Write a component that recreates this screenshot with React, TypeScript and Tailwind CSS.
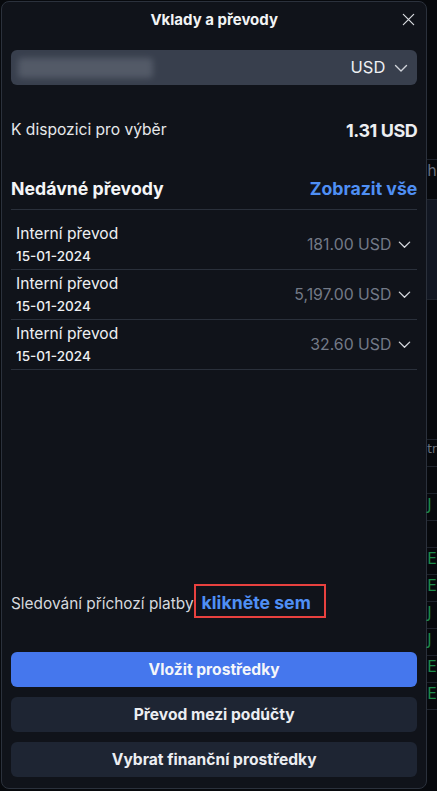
import React from "react";

const Chevron = ({ className = "" }: { className?: string }) => (
  <svg viewBox="0 0 16 16" className={className} fill="none" stroke="currentColor" strokeWidth="1.4" strokeLinecap="round" strokeLinejoin="round">
    <path d="M2.5 5.5 8 11l5.5-5.5" />
  </svg>
);

const rows = [
  { amount: "181.00 USD" },
  { amount: "5,197.00 USD" },
  { amount: "32.60 USD" },
];

export default function App() {
  return (
    <div className="w-[437px] h-[791px] bg-[#07090d] flex overflow-hidden" style={{ fontFamily: "Inter, 'Noto Sans', sans-serif" }}>
      <div className="w-[428px] h-[788px] mt-px ml-px border border-[#2b313c] rounded-lg bg-[#10131a] flex flex-col px-[9px] text-white">
        <div className="relative h-[36px] flex items-center justify-center">
          <span className="text-[15px] font-bold text-[#f2f3f5]">Vklady a převody</span>
          <svg viewBox="0 0 16 16" className="absolute right-[1px] top-[10px] w-[15px] h-[15px] text-[#d8dbe0]" fill="none" stroke="currentColor" strokeWidth="1.3" strokeLinecap="round">
            <path d="M2.5 2.5l11 11M13.5 2.5l-11 11" />
          </svg>
        </div>
        <div className="mt-[12px] h-[35px] rounded-md bg-[#383f4d] flex items-center pl-[7px] pr-[8px]">
          <div className="w-[135px] h-[20px] rounded bg-[#5a616e] blur-[3px] opacity-80" />
          <div className="flex-1" />
          <span className="text-[16.5px] text-[#eef0f3]">USD</span>
          <Chevron className="w-[16px] h-[16px] ml-[8px] text-[#d0d4da]" />
        </div>
        <div className="mt-[33px] h-[24px] flex items-center justify-between">
          <span className="text-[15.6px] text-[#e6e8eb]">K dispozici pro výběr</span>
          <span className="text-[18px] font-bold tracking-tight text-[#eceef1]">1.31 USD</span>
        </div>
        <div className="mt-[34px] h-[26px] flex items-center justify-between">
          <span className="text-[17.7px] font-bold text-[#f4f5f7]">Nedávné převody</span>
          <span className="text-[17.7px] font-bold text-[#4f8ff4]">Zobrazit vše</span>
        </div>
        <div className="mt-[7px] border-b border-[#2a303b]" />
        <div className="pt-[10px]">
          {rows.map((r, i) => (
            <div key={i} className="h-[50px] border-b border-[#2a303b] flex items-center justify-between pl-[5px] pr-[5px]">
              <div className="flex flex-col leading-[22px]">
                <span className="text-[15.6px] text-[#eef0f2]">Interní převod</span>
                <span className="text-[13.6px] font-medium text-[#eef0f2]">15-01-2024</span>
              </div>
              <div className="flex items-center">
                <span className="text-[15.8px] text-[#737a87]">{r.amount}</span>
                <Chevron className="w-[15px] h-[15px] ml-[6px] text-[#d5d8dd]" />
              </div>
            </div>
          ))}
        </div>
        <div className="flex-1" />
        <div className="flex items-baseline">
          <span className="text-[15.4px] leading-[22px] text-[#d6d9de]">Sledování příchozí platby</span>
          <span className="pt-[6px] pb-[2px] pl-[6px] pr-[13px] border-2 border-[#e8413f] text-[#4f8ff4] font-bold text-[17.7px] leading-[22px]">klikněte sem</span>
        </div>
        <div className="mt-[34px] flex flex-col gap-[10px] mb-[11px]">
          <button className="h-[35px] rounded-md bg-[#4577ed] text-[15.6px] font-bold text-[#f4f6fa]">Vložit prostředky</button>
          <button className="h-[35px] rounded-md bg-[#1e2533] text-[15.6px] font-bold text-[#eceef2]">Převod mezi podúčty</button>
          <button className="h-[35px] rounded-md bg-[#1e2533] text-[15.6px] font-bold text-[#eceef2]">Vybrat finanční prostředky</button>
        </div>
      </div>
      <div className="flex-1 flex flex-col text-[#1f8a4c] text-[15px]" style={{ fontFamily: "'DejaVu Sans', sans-serif" }}>
        <div className="h-[160px] border-b border-[#1e232c]" />
        <div className="h-[40px] border-b border-[#1e232c] text-[#6b7280]">h</div>
        <div className="h-[100px] border-b border-[#1e232c] bg-[#121722]" />
        <div className="h-[140px] border-b border-[#1e232c]" />
        <div className="h-[27px] border-b border-[#1e232c] text-[#6b7280] text-[12px]">tr</div>
        <div className="h-[27px] border-b border-[#1e232c]" />
        <div className="h-[27px] border-b border-[#1e232c]">J</div>
        <div className="h-[27px] border-b border-[#1e232c]" />
        <div className="h-[27px] border-b border-[#1e232c]">E</div>
        <div className="h-[27px] border-b border-[#1e232c]">E</div>
        <div className="h-[27px] border-b border-[#1e232c]">J</div>
        <div className="h-[27px] border-b border-[#1e232c]">J</div>
        <div className="h-[27px] border-b border-[#1e232c]">E</div>
        <div className="h-[27px] border-b border-[#1e232c]">E</div>
      </div>
    </div>
  );
}
